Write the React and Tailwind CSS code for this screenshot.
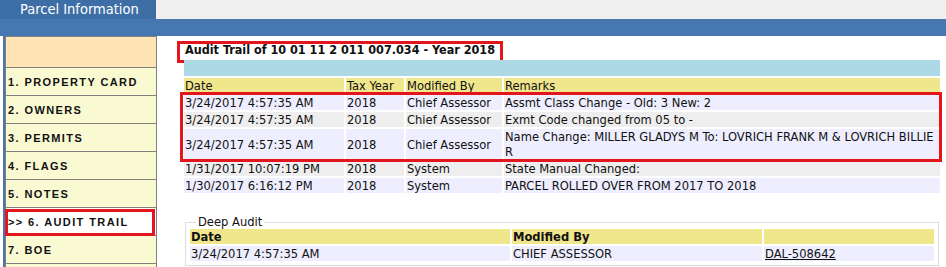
import React from 'react';

const navItems = [
  '1. PROPERTY CARD',
  '2. OWNERS',
  '3. PERMITS',
  '4. FLAGS',
  '5. NOTES',
  '>> 6. AUDIT TRAIL',
  '7. BOE',
  '',
];

const rows = [
  { date: '3/24/2017 4:57:35 AM', year: '2018', by: 'Chief Assessor', remarks: ['Assmt Class Change - Old: 3 New: 2'], bg: 'bg-[#eeeeff]' },
  { date: '3/24/2017 4:57:35 AM', year: '2018', by: 'Chief Assessor', remarks: ['Exmt Code changed from 05 to -'], bg: 'bg-[#eeeeee]' },
  { date: '3/24/2017 4:57:35 AM', year: '2018', by: 'Chief Assessor', remarks: ['Name Change: MILLER GLADYS M To: LOVRICH FRANK M & LOVRICH BILLIE', 'R'], bg: 'bg-[#eeeeff]' },
  { date: '1/31/2017 10:07:19 PM', year: '2018', by: 'System', remarks: ['State Manual Changed:'], bg: 'bg-[#eeeeee]' },
  { date: '1/30/2017 6:16:12 PM', year: '2018', by: 'System', remarks: ['PARCEL ROLLED OVER FROM 2017 TO 2018'], bg: 'bg-[#eeeeff]' },
];

function App() {
  return (
    <div className="w-[946px] h-[267px] overflow-hidden bg-white text-[#111] font-['DejaVu_Sans_Condensed','DejaVu_Sans',sans-serif]">
      {/* Tab strip */}
      <div className="flex h-[19px]">
        <div className="w-[156px] bg-[#3d6fa6] text-white text-[14.5px] leading-[19px] pl-[20px] whitespace-nowrap">Parcel Information</div>
        <div className="flex-1 bg-[#f0f0f0]"></div>
      </div>
      <div className="h-[17px] bg-[#4677b0]"></div>

      <div className="flex">
        <div className="ml-[3px] w-[2px] h-[240px] bg-[#4677b0]"></div>

        {/* Left nav */}
        <div className="w-[152px] border border-[#808080] bg-[#fafad2] font-['Liberation_Sans',sans-serif] font-bold text-[11px] tracking-[1.4px]">
          <div className="h-[31px] bg-[#ffe4b5] border-b border-[#808080]"></div>
          {navItems.map((item, i) => {
            const active = item.startsWith('>>');
            return (
              <div
                key={i}
                className={`relative h-[28px] border-b border-[#808080] pl-[2px] pt-[2px] leading-[25px] whitespace-nowrap ${active ? 'bg-white' : ''}`}
              >
                {item}
                {active && <div className="absolute -left-[1px] right-[1px] top-[1px] bottom-[-1px] border-[3px] border-[#e3161e]"></div>}
              </div>
            );
          })}
        </div>

        {/* Main */}
        <div className="relative flex-1 pl-[27px] pt-[6px] text-[12.8px]">
          <div className="h-[16px] leading-[16px] pl-[1px] font-bold text-[12.5px] whitespace-nowrap">Audit Trail of 10 01 11 2 011 007.034 - Year 2018</div>
          <div className="absolute left-[20px] top-[5px] w-[326px] h-[22px] border-[3px] border-[#e3161e]"></div>

          <div className="relative mt-[2px] w-[756px] grid grid-cols-[160px_58px_96px_436px] gap-[2px] leading-[15px]">
            <div className="col-span-4 h-[16px] bg-[#add8e6]"></div>
            <div className="bg-[#f0e68c] pl-[1px]">Date</div>
            <div className="bg-[#f0e68c] pl-[1px]">Tax Year</div>
            <div className="bg-[#f0e68c] pl-[1px]">Modified By</div>
            <div className="bg-[#f0e68c] pl-[1px]">Remarks</div>
            {rows.map((r, i) => (
              <React.Fragment key={i}>
                <div className={`${r.bg} pl-[1px] flex items-center whitespace-nowrap`}>{r.date}</div>
                <div className={`${r.bg} pl-[1px] flex items-center`}>{r.year}</div>
                <div className={`${r.bg} pl-[1px] flex items-center whitespace-nowrap`}>{r.by}</div>
                <div className={`${r.bg} pl-[1px] whitespace-nowrap`}>
                  {r.remarks.map((line, j) => (
                    <div key={j}>{line}</div>
                  ))}
                </div>
              </React.Fragment>
            ))}
            <div className="absolute -left-[4px] top-[32px] w-[762px] h-[70px] border-[3px] border-[#e3161e]"></div>
          </div>

          {/* Deep Audit */}
          <fieldset className="mt-[22px] ml-[1px] w-[754px] border border-[#dddddd] px-[4px] pb-[4px]">
            <legend className="ml-[6px] px-[2px] leading-[14px]">Deep Audit</legend>
            <div className="grid grid-cols-[320px_250px_170px] gap-[2px] leading-[15px]">
              <div className="bg-[#f0e68c] pl-[1px] font-bold">Date</div>
              <div className="bg-[#f0e68c] pl-[1px] font-bold">Modified By</div>
              <div className="bg-[#f0e68c]"></div>
              <div className="bg-[#eeeeff] pl-[1px]">3/24/2017 4:57:35 AM</div>
              <div className="bg-[#eeeeff] pl-[1px]">CHIEF ASSESSOR</div>
              <div className="bg-[#eeeeff] pl-[1px]">
                <a href="#" className="underline text-[#111]">DAL-508642</a>
              </div>
            </div>
          </fieldset>
        </div>
      </div>
    </div>
  );
}

export default App;
